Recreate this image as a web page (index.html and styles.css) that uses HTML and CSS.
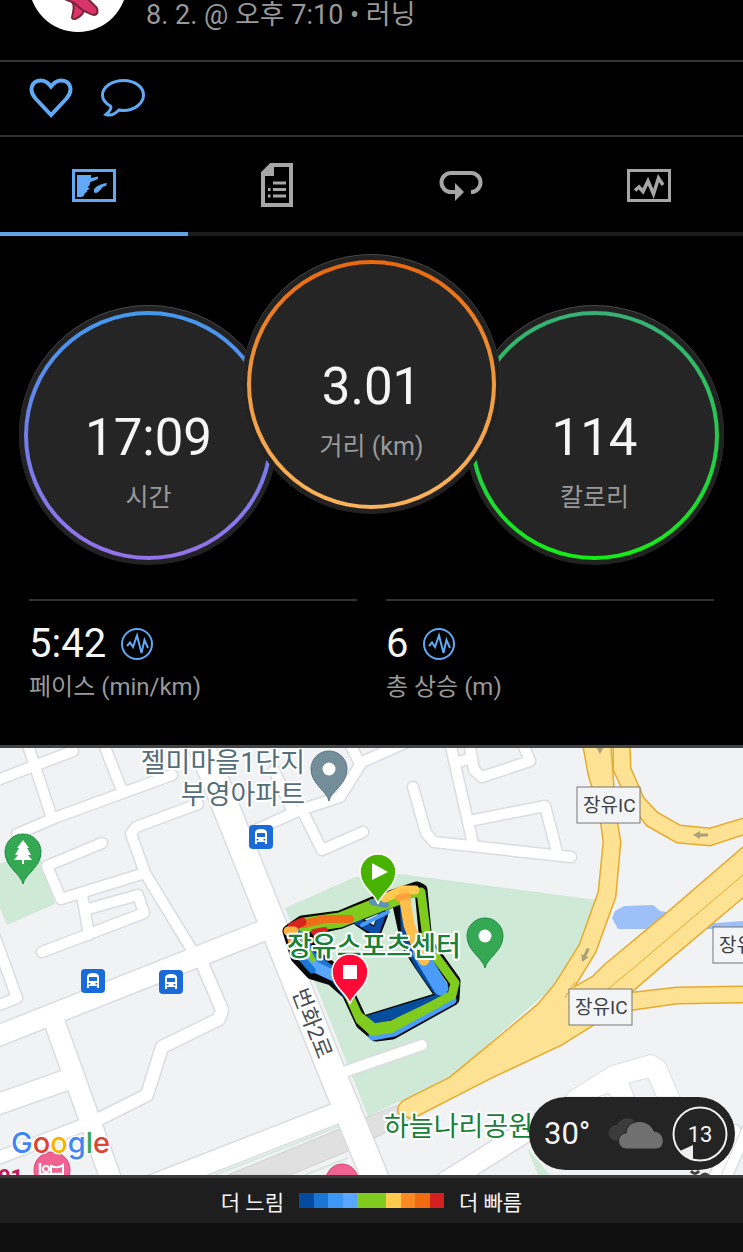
FILE: index.html
```html
<!DOCTYPE html>
<html lang="ko">
<head>
    <meta charset="UTF-8">
    <meta name="viewport" content="width=device-width, initial-scale=1.0">
    <title>러닝</title>
    <link rel="stylesheet" href="styles.css">
</head>
<body>
    <header class="activity-header">
        <svg class="avatar" viewBox="0 0 98 98" aria-hidden="true">
            <circle cx="49" cy="49" r="49" fill="#fff"/>
            <path d="M28 58 C34 66 38 66 43 68 C47 73 43 80 43 84 C46 88 54 80 55 77 C59 78 61 81 65 81 C70 80 69 74 66 72 L48 54Z" fill="#d9346c" stroke="#7c2438" stroke-width="2"/>
            <path d="M43 68 C48 70 50 74 55 77" fill="none" stroke="#7c2438" stroke-width="2"/>
        </svg>
        <p class="activity-date">8. 2. @ 오후 7:10 • 러닝</p>
    </header>

    <div class="actions">
        <button class="icon-button" aria-label="좋아요">
            <svg width="44" height="40" viewBox="0 0 44 40">
                <path d="M22 37 L6.5 20.5 C-1 12 3 2.5 12 2.5 C16 2.5 19 4.5 22 8.5 C25 4.5 28 2.5 32 2.5 C41 2.5 45 12 37.5 20.5Z" fill="none" stroke="#61a8f5" stroke-width="4"/>
            </svg>
        </button>
        <button class="icon-button" aria-label="댓글">
            <svg width="44" height="40" viewBox="0 0 44 40">
                <path d="M18 32 C14 36 9 38 5 36.5 C8 34 11 31 9.5 28 C4 25 1.5 21 1.5 17 C1.5 9 11 2.5 22.5 2.5 S42.5 9 42.5 17 S34 32.5 22.5 32.5 C21 32.5 19.500 32.300 18 32Z" fill="none" stroke="#61a8f5" stroke-width="3"/>
            </svg>
        </button>
    </div>

    <nav class="tabs">
        <button class="tab active" aria-label="지도">
            <svg width="44" height="33" viewBox="0 0 44 33">
                <rect x="1.5" y="1.5" width="41" height="30" fill="none" stroke="currentColor" stroke-width="3"/>
                <path d="M5 6 H19 V9 L26 7.5 V10 L20 12.5 C16 13 20 16 15.5 18 L18 20 C13 21 17 23 13 24 C12 27 11 28 9 28 H5Z" fill="currentColor"/>
                <path d="M22 22 C21 19 27 15 35 14 L34 17 C29 17 30 22 24 24 C22 24 22 23 22 22Z" fill="currentColor"/>
            </svg>
        </button>
        <button class="tab" aria-label="세부 정보">
            <svg width="32" height="44" viewBox="0 0 32 44">
                <path d="M10 2 H30 V42 H2 V10Z" fill="none" stroke="currentColor" stroke-width="4"/>
                <path d="M2 9 L9 2 H13 V13 H2Z" fill="currentColor"/>
                <path d="M12 20 H25 M12 26.5 H25 M12 33 H25 M7 26.5 H9.5 M7 33 H9.5" stroke="currentColor" stroke-width="3"/>
            </svg>
        </button>
        <button class="tab" aria-label="랩">
            <svg width="44" height="33" viewBox="0 0 44 33">
                <path d="M18 23 H12 A9.5 9.5 0 0 1 12 4 H32 A9.5 9.5 0 0 1 32 23" fill="none" stroke="currentColor" stroke-width="4"/>
                <path d="M16 14 L25 23 L16 32Z" fill="currentColor"/>
            </svg>
        </button>
        <button class="tab" aria-label="차트">
            <svg width="44" height="33" viewBox="0 0 44 33">
                <rect x="1.5" y="1.5" width="41" height="30" fill="none" stroke="currentColor" stroke-width="3"/>
                <path d="M8 21.5 L12 18 L16 22.500 L21 12 L26.5 25 L31.5 9 L36 16" fill="none" stroke="currentColor" stroke-width="3.5"/>
            </svg>
        </button>
    </nav>

    <section class="dials">
        <div class="dial dial-time">
            <span class="dial-value">17:09</span>
            <span class="dial-label">시간</span>
        </div>
        <div class="dial dial-distance">
            <span class="dial-value">3.01</span>
            <span class="dial-label">거리 (km)</span>
        </div>
        <div class="dial dial-calories">
            <span class="dial-value">114</span>
            <span class="dial-label">칼로리</span>
        </div>
    </section>

    <section class="stats">
        <div class="stat">
            <div class="stat-row">
                <span class="stat-value">5:42</span>
                <button class="icon-button" aria-label="페이스 차트">
                    <svg width="32" height="32" viewBox="0 0 32 32">
                        <g id="pulse" fill="none" stroke="#61a8f5" stroke-width="2">
                            <circle cx="16" cy="16" r="15"/>
                            <path d="M6 18 L9 14.5 L12 19 L16 7.5 L20.5 25 L23.5 12 L27 20"/>
                        </g>
                    </svg>
                </button>
            </div>
            <div class="stat-label">페이스 (min/km)</div>
        </div>
        <div class="stat">
            <div class="stat-row">
                <span class="stat-value">6</span>
                <button class="icon-button" aria-label="고도 차트">
                    <svg width="32" height="32" viewBox="0 0 32 32"><use href="#pulse"/></svg>
                </button>
            </div>
            <div class="stat-label">총 상승 (m)</div>
        </div>
    </section>

    <section class="map">
        <svg class="map-canvas" viewBox="0 748 743 427">
            <defs>
                <g id="lanes">
                    <path d="M-5 781 L73 751 M27 742 L52 818 M103 742 L121 788 M17 834 L57 817 L172 775"/>
                    <path d="M102 843 L47 866 L61 899 L145 873 M198 804 L136 827 L131 834 L145 873 L162 901 L195 955"/>
                    <path d="M82 895 L89 935 M88 909 L138 895 L144 913 L42 952 M-6 935 L4 962 L17 998 L-6 1007"/>
                    <path d="M240 837 L300 810 L340 797 L362 762 L405 743 M349 742 L360 764 M303 812 L322 850 L363 832 M274 770 L293 812"/>
                    <path d="M413 787 L426 833 L434 842 L571 857 M450 742 L473 844 M474 820 L545 806 L557 852"/>
                    <path d="M469 742 L474 770 L482 777 L530 761 L522 742 M455 763 L472 758"/>
                    <path d="M335 1075 L422 1045 M725 1180 L748 1128 M713 1180 L735 1130"/>
                </g>
                <g id="streets">
                    <path d="M-10 1161 L97 1120 L147 1095 L162 1047 L219 1019 L222 1010 L202 963"/>
                </g>
                <g id="roads">
                    <path d="M-10 1039 L270 928 M52 1015 L112 1182 M-10 1107 L72 1078 M140 1190 L350 1108 M430 1192 L560 1110"/>
                </g>
                <g id="avenue">
                    <path d="M200 742 L247 860 L335 1080 L378 1185"/>
                </g>
                <g id="highways">
                    <path d="M583 742 L589 775 L600 812 L604 842 L599 892 L580 945 L555 985 L538 1005 L490 1045 L450 1078 L404 1101 Q397 1106 399 1113 L412 1118 L490 1078 L560 1045 L592 1025 L573 988 L595 952 L615 897 L620 842 L615 812 L610 742Z"/>
                    <path d="M750 842 L663 917 L605 965 L593 977 L570 990 L545 1035 L560 1045 L592 1025 L633 990 L662 965 L750 891Z"/>
                    <path d="M614 742 V770 L627 798 L647 825 L677 842 L710 845 L750 832 V817 L710 829 L680 826 L657 813 L643 798 L630 768 L629 742Z"/>
                    <path d="M600 996 L633 993 L677 988 L750 987 V1002 L677 1003 L600 1014Z"/>
                </g>
                <path id="pin" d="M0 32 C-2 22 -18 15 -18 0 A18 18 0 0 1 18 0 C18 15 2 22 0 32Z"/>
                <g id="bus">
                    <rect width="24" height="24" rx="4" fill="#1a6bd8"/>
                    <path d="M6 19 V8 Q6 4 12 4 Q18 4 18 8 V19 H16 V17 H8 V19Z" fill="#fff"/>
                    <path d="M8 8 H16 V12 H8Z M7.5 14 H9.5 V15.5 H7.5Z M14.5 14 H16.5 V15.5 H14.5Z" fill="#1a6bd8"/>
                </g>
                <path id="oneway" d="M0 0 L7 -4 V-1.5 H15 V1.5 H7 V4Z" fill="#aaa07c"/>
            </defs>

            <rect y="748" width="743" height="427" fill="#f0f2f4"/>

            <!-- parks and water -->
            <path d="M0 863 L40 856 L55 904 L7 925 L0 908Z" fill="#cfe9d7"/>
            <path d="M285 908 L355 877 L400 874 L597 900 L580 945 L555 985 L450 1078 L368 1116Z" fill="#cfe9d7"/>
            <path d="M527 1148 L550 1175 H538Z" fill="#cfe9d7"/>
            <path d="M612 918 L615 911 L624 906 L653 905 L660 911 L680 914 L715 923 L743 921 V929 H660 L618 929Z" fill="#9dc0f8"/>

            <!-- railway -->
            <path d="M228 1175 L342 1128 L353 1149 L290 1175Z M362 1119 L398 1105 L412 1118 L373 1139Z" class="railway"/>
            <path d="M215 1175 L342 1125 M305 1175 L348 1158" class="verge"/>

            <use href="#lanes" class="road-edge lane-edge"/>
            <use href="#streets" class="road-edge street-edge"/>
            <use href="#roads" class="road-edge main-edge"/>
            <use href="#avenue" class="road-edge avenue-edge"/>
            <path d="M565 1097 L570 1091 L610 1066 L652 1054 L665 1062 L680 1097Z" fill="#fff" stroke="#dadce0"/>
            <use href="#lanes" class="road-fill lane-fill"/>
            <use href="#streets" class="road-fill street-fill"/>
            <use href="#roads" class="road-fill main-fill"/>
            <use href="#avenue" class="road-fill avenue-fill"/>
            <path d="M629 1083 L648 1078 L657 1098 H635Z M590 1100 L609 1093 L613 1100Z" fill="#f0f2f4" stroke="#dadce0"/>

            <use href="#highways" class="highway-edge"/>
            <use href="#highways" class="highway-fill"/>
            <path d="M750 869 L637 965 L608 989 M565 998 L575 982" class="highway-line"/>
            <use href="#oneway" transform="translate(693 835)"/>
            <use href="#oneway" transform="translate(582 962) rotate(-65)"/>
            <use href="#oneway" transform="translate(600 754) rotate(-90)"/>

            <!-- recorded track -->
            <g class="track">
                <g stroke="#090909">
                    <path d="M289 931 L302 922 L340 917 L378 901 L417 888 L421 890 L426 942 L454 981 L453 999 L392 1033 L376 1035 L362 1023 L348 993 L332 979 L312 973 L297 957Z" stroke-width="13"/>
                    <path d="M300 931 L340 922 L398 898 L408 944 L420 963 L444 998 L366 1022" stroke-width="14"/>
                    <path d="M358 921 L376 933 L383 915" stroke-width="10"/>
                    <path d="M308 936 L316 956 L336 970" stroke-width="11"/>
                </g>
                <path d="M357 921 L376 932 L382 915" stroke="#0b4da8" stroke-width="7"/>
                <path d="M405 900 L407 940 L421 966 L444 998 L365 1022" stroke="#064d9e" stroke-width="11"/>
                <path d="M300 932 L308 955 L334 974 L350 995" stroke="#1976d2" stroke-width="12"/>
                <path d="M302 950 L315 967 L332 975" stroke="#58a6ff" stroke-width="11"/>
                <path d="M302 938 L313 960" stroke="#80cc1e" stroke-width="5"/>
                <path d="M289 931 L297 953 L312 970" stroke="#1976d2" stroke-width="7"/>
                <path d="M290 933 L294 949" stroke="#ff8a24" stroke-width="8"/>
                <path d="M420 953 L441 988" stroke="#4a9cf8" stroke-width="15"/>
                <path d="M373 1036 L394 1032 L452 1000" stroke="#4a9cf8" stroke-width="9"/>
                <path d="M335 975 L348 993 L360 1020 L372 1031 L390 1029 L452 995 L455 983 L428 946 L421 892 L398 896" stroke="#80cc1e" stroke-width="9"/>
                <path d="M360 1017 L374 1028 L392 1025 L440 1002" stroke="#80cc1e" stroke-width="9"/>
                <path d="M305 925 L340 920 L378 905 L397 898" stroke="#80cc1e" stroke-width="15"/>
                <path d="M372 902 L386 905" stroke="#5b93b0" stroke-width="6"/>
                <path d="M362 925 L388 912" stroke="#4a9cf8" stroke-width="4"/>
                <path d="M385 898 L402 890 L415 890" stroke="#ffca4d" stroke-width="9"/>
                <path d="M404 894 L409 925 L416 943 L424 960" stroke="#ffbf4a" stroke-width="11"/>
                <path d="M398 898 L408 896" stroke="#ffa13a" stroke-width="6"/>
                <path d="M304 924 L325 919 L350 919" stroke="#ef6c18" stroke-width="8"/>
                <path d="M292 927 L302 922" stroke="#d9231f" stroke-width="9"/>
                <path d="M288 931 L294 931" stroke="#ffb03d" stroke-width="9"/>
                <path d="M314 932 L325 930" stroke="#d9231f" stroke-width="6"/>
            </g>

            <use href="#bus" x="249" y="825"/>
            <use href="#bus" x="81" y="969"/>
            <use href="#bus" x="159" y="970"/>

            <g transform="translate(329 769)">
                <use href="#pin" fill="#738d99" stroke="#5c7684"/>
                <circle r="6.5" fill="#fff"/>
            </g>
            <g transform="translate(23 852)">
                <use href="#pin" fill="#34a853" stroke="#1f8a44"/>
                <path d="M0 -12 L6 -4 H4 L8 3 H5 L9 8 H1 V12 H-1 V8 H-9 L-5 3 H-8 L-4 -4 H-6Z" fill="#fff"/>
            </g>
            <g transform="translate(485 936)">
                <use href="#pin" fill="#34a853" stroke="#1f8a44"/>
                <circle r="6.5" fill="#fff"/>
            </g>

            <g class="place">
                <text x="305" y="772" text-anchor="end" fill="#546e7a">젤미마을1단지</text>
                <text x="305" y="804" text-anchor="end" fill="#546e7a">부영아파트</text>
                <text x="287" y="956" class="place-main">장유스포츠센터</text>
                <text x="384" y="1136" fill="#188038">하늘나리공원</text>
                <text class="street-name" transform="translate(292 992) rotate(69)">번화2로</text>
            </g>

            <g transform="translate(378 872)">
                <use href="#pin" fill="#47b200" stroke="#fff" stroke-width="1.5"/>
                <path d="M-6 -9 L10 0 L-6 8Z" fill="#fff"/>
            </g>
            <g transform="translate(350 972)">
                <use href="#pin" fill="#ff0a37" stroke="#fff" stroke-width="1.5"/>
                <rect x="-7" y="-7" width="14" height="14" fill="#fff"/>
            </g>

            <g class="junction">
                <rect x="577" y="787" width="63" height="36"/>
                <text x="583" y="812">장유IC</text>
                <rect x="569" y="989" width="63" height="36"/>
                <text x="575" y="1014">장유IC</text>
                <rect x="713" y="927" width="63" height="36"/>
                <text x="719" y="952">장유IC</text>
            </g>

            <g transform="translate(52 1170)">
                <circle r="18" fill="#f06292" stroke="#d9447b"/>
                <path d="M-12 -7 V11 M-12 4 H12" stroke="#fff" stroke-width="2.5"/>
                <circle cx="-6" cy="-1" r="3" fill="none" stroke="#fff" stroke-width="2"/>
                <path d="M-1 4 V-4 Q6 -1 11 -5 V8" fill="none" stroke="#fff" stroke-width="2"/>
            </g>
            <circle cx="342" cy="1180" r="16" fill="#f06292" stroke="#d9447b"/>
            <text x="-2" y="1185" class="poi-number">01</text>
            <path d="M691 1171 Q695 1176 699 1171 M701 1176 Q705 1172 709 1176" fill="none" stroke="#444" stroke-width="3"/>

            <text x="11" y="1153" class="google">
                <tspan fill="#4285f4">G</tspan><tspan fill="#db4437">o</tspan><tspan fill="#f4b400">o</tspan><tspan fill="#4285f4">g</tspan><tspan fill="#34a853">l</tspan><tspan fill="#db4437">e</tspan>
            </text>
        </svg>

        <div class="weather">
            <span class="temperature">30°</span>
            <svg width="56" height="32" viewBox="0 0 56 32">
                <path d="M8 23 A8 8 0 0 1 9 7 C13 -1 24 -2 28 5 V23Z" fill="#3b3b3b"/>
                <path d="M19 31 C8 31 8 16 18 15 C19 0 41 0 46 13 C58 14 58 31 48 31Z" fill="#707070" stroke="#242424"/>
            </svg>
            <svg width="56" height="56" viewBox="0 0 56 56">
                <circle cx="28" cy="28" r="26.5" fill="none" stroke="#eee" stroke-width="2"/>
                <path d="M8 45 L21 39 V53 Q13 51 8 45Z" fill="#eee"/>
                <text x="28" y="36" text-anchor="middle" class="day">13</text>
            </svg>
        </div>
    </section>

    <footer class="legend">
        <span>더 느림</span>
        <div class="scale">
            <i class="s1"></i><i class="s2"></i><i class="s3"></i><i class="s4"></i><i class="s5"></i><i class="s5"></i><i class="s6"></i><i class="s7"></i><i class="s8"></i><i class="s9"></i>
        </div>
        <span>더 빠름</span>
    </footer>
</body>
</html>
```
FILE: styles.css
```css
* {
    box-sizing: border-box;
}

html {
    background-color: #101010;
}

body {
    margin: 0;
    font-family: Roboto, 'Noto Sans CJK KR', sans-serif;
    background-color: #000;
    color: #f5f5f5;
    overflow-x: hidden;
}

button {
    padding: 0;
    border: none;
    background: none;
    font: inherit;
    cursor: pointer;
}

svg {
    display: block;
}

.activity-header {
    display: flex;
    align-items: flex-end;
    gap: 19px;
    height: 62px;
    padding: 0 29px 28px;
    border-bottom: 2px solid #333;
    overflow: hidden;
}

.avatar {
    flex: none;
    width: 98px;
    height: 98px;
}

.activity-date {
    margin: 0;
    font-size: 27px;
    line-height: 34px;
    color: #999;
}

.actions {
    display: flex;
    align-items: center;
    gap: 28px;
    padding: 16px 29px 17px;
    border-bottom: 2px solid #333;
}

.icon-button {
    flex: none;
}

/* タブ */
.tabs {
    display: grid;
    grid-template-columns: 19fr 18fr 19fr 19fr;
}

.tab {
    display: flex;
    align-items: center;
    justify-content: center;
    height: 99px;
    padding-top: 1px;
    border-bottom: 4px solid #1c1c1c;
    color: #a6a6a6;
}

.tab.active {
    color: #61a8f5;
    border-bottom-color: #61a1e6;
}

.dials {
    display: flex;
    justify-content: center;
    padding: 24px 0 39px;
}

.dial {
    display: flex;
    flex: none;
    flex-direction: column;
    align-items: center;
    width: 249px;
    height: 249px;
    margin-top: 51px;
    padding-top: 93px;
    border: 4px solid transparent;
    border-radius: 50%;
    box-shadow: 0 0 0 5px #222, 0 -1px 0 5px #4a4a4a;
}

.dial-time {
    background: linear-gradient(#252525, #252525) padding-box, linear-gradient(#4399ed, #707eea, #9472ec) border-box;
}

.dial-distance {
    z-index: 1;
    margin: 0 -26px;
    background: linear-gradient(#252525, #252525) padding-box, linear-gradient(#e8680f, #f09a3e, #fbb45b) border-box;
}

.dial-calories {
    background: linear-gradient(#252525, #252525) padding-box, linear-gradient(#38b078, #28c850, #15ec15) border-box;
}

.dial-value {
    font-size: 51px;
    line-height: 60px;
}

.dial-label {
    margin-top: 12px;
    font-size: 25px;
    line-height: 36px;
    color: #999;
}

.stats {
    display: grid;
    grid-template-columns: 1fr 1fr;
    gap: 29px;
    padding: 0 29px 40px;
}

.stat {
    padding-top: 19px;
    border-top: 2px solid #333;
}

.stat-row {
    display: flex;
    align-items: center;
    gap: 15px;
    height: 48px;
}

.stat-value {
    font-size: 40px;
    line-height: 48px;
}

.stat-label {
    margin-top: 1px;
    font-size: 24px;
    line-height: 36px;
    color: #999;
}

/* 地図 */
.map {
    position: relative;
    border-top: 3px solid #434343;
    border-bottom: 3px solid #3a3a3a;
}

.map-canvas {
    width: 100%;
    height: auto;
}

.railway {
    fill: #e0e0e0;
    stroke: #d0d0d0;
}

.verge {
    stroke: #d5eadf;
    stroke-width: 2;
}

.road-edge,
.road-fill {
    fill: none;
    stroke-linecap: round;
    stroke-linejoin: round;
}

.road-edge {
    stroke: #dadce0;
}

.road-fill {
    stroke: #fff;
}

.lane-edge {
    stroke-width: 13px;
}

.lane-fill {
    stroke-width: 10px;
}

.street-edge {
    stroke-width: 15px;
}

.street-fill {
    stroke-width: 12px;
}

.main-edge {
    stroke-width: 23px;
}

.main-fill {
    stroke-width: 20px;
}

.avenue-edge {
    stroke-width: 29px;
}

.avenue-fill {
    stroke-width: 26px;
}

.highway-edge {
    fill: none;
    stroke: #e6aa2e;
    stroke-width: 3px;
}

.highway-fill {
    fill: #fde293;
}

.highway-line {
    fill: none;
    stroke: #e6aa2e;
}

.track {
    fill: none;
    stroke-linecap: round;
    stroke-linejoin: round;
}

.place {
    font-size: 27px;
    stroke: #fff;
    stroke-width: 4px;
    stroke-linejoin: round;
    paint-order: stroke;
}

.place-main {
    font-weight: 500;
    fill: #188038;
}

.street-name {
    font-size: 22px;
    fill: #4a4d51;
}

.junction rect {
    fill: #f3f4f6;
    stroke: #777;
}

.junction text {
    font-size: 19px;
    fill: #3c4043;
}

.poi-number {
    font-size: 22px;
    font-weight: 700;
    fill: #c2185b;
}

.google {
    font-family: Inter, 'Liberation Sans', sans-serif;
    font-size: 29px;
    font-weight: 500;
    stroke: #fff;
    stroke-width: 3px;
    paint-order: stroke;
}

.weather {
    position: absolute;
    right: 8px;
    bottom: 5px;
    display: flex;
    align-items: center;
    width: 206px;
    height: 73px;
    padding: 0 7px 0 15px;
    border-radius: 37px;
    background-color: #242424;
}

.temperature {
    flex: 1;
    font-size: 31px;
}

.weather svg + svg {
    margin-left: 8px;
}

.day {
    font-size: 22px;
    fill: #f5f5f5;
}

.legend {
    display: flex;
    align-items: center;
    justify-content: center;
    gap: 15px;
    height: 45px;
    background-color: #1e1e1e;
    font-size: 21px;
}

.scale {
    display: grid;
    grid-template-columns: repeat(10, 1fr);
    width: 145px;
    height: 15px;
}

.s1 { background-color: #044a9e; }
.s2 { background-color: #1976d2; }
.s3 { background-color: #3d97f5; }
.s4 { background-color: #58a6ff; }
.s5 { background-color: #80cc1e; }
.s6 { background-color: #ffca4d; }
.s7 { background-color: #ff8a24; }
.s8 { background-color: #ef6c10; }
.s9 { background-color: #d4211f; }
```
